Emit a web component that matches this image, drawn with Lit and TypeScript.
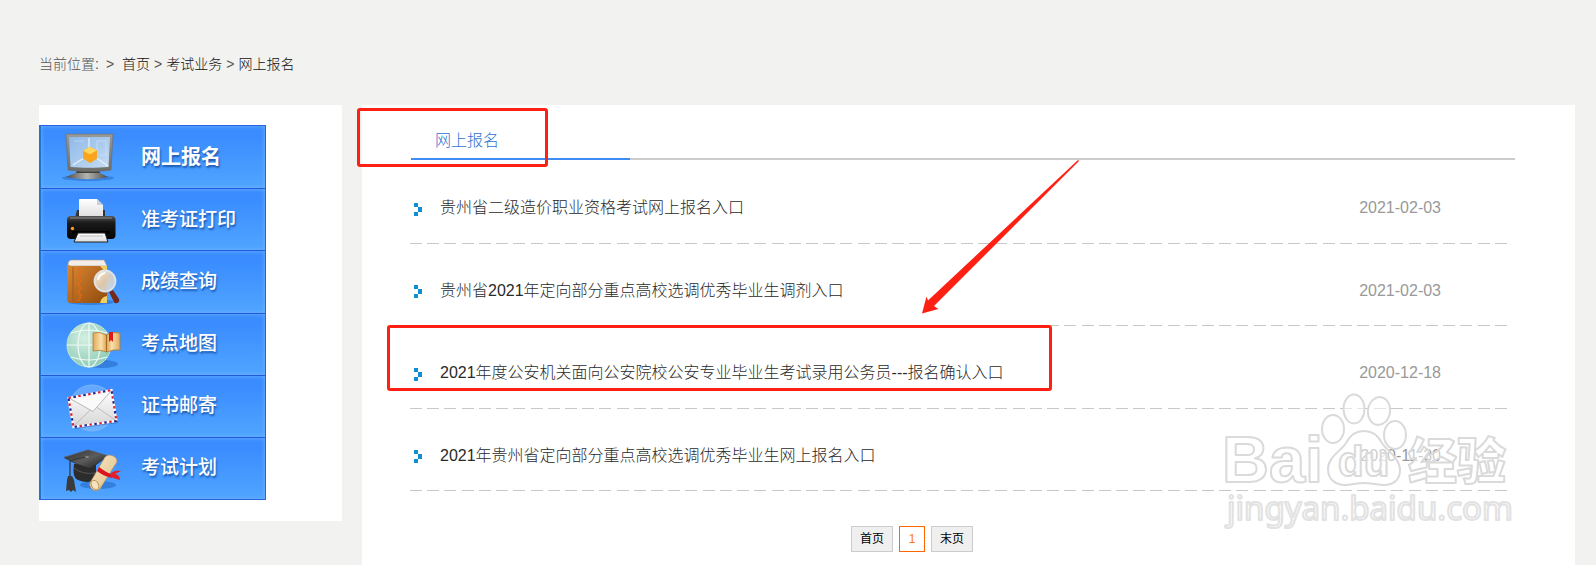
import { LitElement, html, svg, css } from "lit";
import { customElement } from "lit/decorators.js";
import { classMap } from "lit/directives/class-map.js";

const monitorIcon = svg`
  <defs>
    <linearGradient id="frame" x1="0" y1="0" x2="0" y2="1"><stop offset="0" stop-color="#9a9a98"/><stop offset="1" stop-color="#6d6d6a"/></linearGradient>
    <linearGradient id="glass" x1="0" y1="0" x2="1" y2="1"><stop offset="0" stop-color="#8fb9e8"/><stop offset="1" stop-color="#c6dcf3"/></linearGradient>
    <linearGradient id="foot" x1="0" y1="0" x2="1" y2="0"><stop offset="0" stop-color="#4b4b49"/><stop offset=".5" stop-color="#b4b4b0"/><stop offset="1" stop-color="#4b4b49"/></linearGradient>
  </defs>
  <ellipse cx="28" cy="49" rx="26" ry="3" fill="#1d5dbb" opacity=".45"/>
  <path d="M17 41h22l1 3H16z" fill="#3e3e3c"/>
  <path d="M15 44h25l8 4c-12 3-28 3-42 0z" fill="url(#foot)"/>
  <path d="M6 5h47l-2 36c-14 2-29 2-43 0z" fill="url(#frame)" stroke="#6a6a68" stroke-width=".6"/>
  <path d="M9 8h41l-1.500 30c-12 1-26 1-38 0z" fill="url(#glass)"/>
  <path d="M29 9v12M24 29l-11 7M35 28l13 9" stroke="#e8f2fc" stroke-width="1.2"/>
  <path d="M37 12h9v14h-9zM14 12h10" stroke="#d9e9fa" stroke-width=".5" fill="none"/>
  <path d="M30 18l7 3.500v8L30 34l-7-4.500v-8z" fill="#f9a61c"/>
  <path d="M30 18l7 3.500-7 4-7-4z" fill="#ffd75c"/>
  <path d="M30 25.500l7-4v8L30 34z" fill="#f9a41c"/>`;

const printerIcon = svg`
  <defs>
    <linearGradient id="sheet" x1="0" y1="0" x2="0" y2="1"><stop offset="0" stop-color="#fff"/><stop offset="1" stop-color="#dcdcdc"/></linearGradient>
    <linearGradient id="body" x1="0" y1="0" x2="0" y2="1"><stop offset="0" stop-color="#555"/><stop offset=".3" stop-color="#1a1a1a"/><stop offset="1" stop-color="#050505"/></linearGradient>
  </defs>
  <path d="M17 18h28v8H15z" fill="#333"/>
  <path d="M19 8q0-1 1-1h17l6 6v13H19z" fill="url(#sheet)"/>
  <path d="M37 7v5q0 1 1 1h5z" fill="#cfcfcf"/>
  <rect x="7" y="24" width="48.500" height="23" rx="4" fill="url(#body)"/>
  <path d="M10 26h42" stroke="#888"/>
  <path d="M12 39h38v3H12z" fill="#000"/>
  <circle cx="12.500" cy="36.500" r="1.700" fill="#ff9b1a"/>
  <path d="M18 41h27l3 9H14z" fill="url(#sheet)" stroke="#222" stroke-width="1"/>
  <path d="M20 44h23" stroke="#bbb"/>`;

const bookIcon = svg`
  <defs>
    <linearGradient id="cover" x1="0" y1="0" x2="1" y2="1"><stop offset="0" stop-color="#dd8a35"/><stop offset="1" stop-color="#8f4a0c"/></linearGradient>
    <linearGradient id="lens" x1="0" y1="0" x2="1" y2="1"><stop offset="0" stop-color="#fff7e8"/><stop offset=".5" stop-color="#e4d2bb"/><stop offset="1" stop-color="#c5dffa"/></linearGradient>
  </defs>
  <ellipse cx="31" cy="48" rx="23" ry="3" fill="#1d5dbb" opacity=".5"/>
  <path d="M8 11q0-5 4-5h32l3 6H10z" fill="#f3eee8" stroke="#a9998a" stroke-width=".6"/>
  <path d="M11 12h36v37H11q-4 0-4-4V9q1 3 4 3z" fill="url(#cover)"/>
  <path d="M13 13v35" stroke="#a5591a"/>
  <path d="M18 14l3 4-3 4 3 4-3 4 3 4-3 4 3 4-3 5" stroke="#e56a17" stroke-width="2" fill="none" stroke-dasharray="2 1"/>
  <path d="M47 12v8l-7-8zM47 49h-7q1-6 7-7z" fill="#f0cf62"/>
  <path d="M49 38l4-2 6 9q1 3-2 4-2 1-3-1z" fill="#74291a"/>
  <circle cx="45" cy="27" r="10.500" fill="url(#lens)" fill-opacity=".9" stroke="#dfe3e8" stroke-width="1.800"/>
  <path d="M38 26q1-6 7-7" stroke="#fff" stroke-width="2" fill="none"/>`;

const globeIcon = svg`
  <defs>
    <radialGradient id="globe" cx=".4" cy=".35" r=".7"><stop offset="0" stop-color="#d3efe2"/><stop offset="1" stop-color="#8ccab4"/></radialGradient>
    <linearGradient id="page" x1="0" y1="0" x2="1" y2="0"><stop offset="0" stop-color="#dfa95e"/><stop offset=".3" stop-color="#fbe1a9"/><stop offset=".5" stop-color="#dba252"/><stop offset=".7" stop-color="#fbe1a9"/><stop offset="1" stop-color="#dfa95e"/></linearGradient>
  </defs>
  <ellipse cx="42" cy="48" rx="16" ry="4" fill="#1d5dbb" opacity=".5"/>
  <circle cx="29" cy="29" r="22" fill="url(#globe)" stroke="#bfe7d8"/>
  <g fill="none" stroke="#eefaf5" stroke-width="1.200">
    <path d="M7 29h44M11 17q18-6 36 0M11 41q18 6 36 0M29 7v44"/>
    <ellipse cx="29" cy="29" rx="11" ry="22"/>
  </g>
  <path d="M33 17q7-2 13 2 6-4 14-2v17q-7-1-13 2-7-3-14-1z" fill="url(#page)" stroke="#b6792c" stroke-width=".8"/>
  <path d="M46.500 19v17" stroke="#a86a20"/>
  <path d="M49 16h4v10l-2-2-2 2z" fill="#e01818"/>`;

const mailIcon = svg`
  <defs>
    <linearGradient id="mail" x1="0" y1="0" x2="0" y2="1"><stop offset="0" stop-color="#fff"/><stop offset="1" stop-color="#d5d5d5"/></linearGradient>
  </defs>
  <circle cx="32" cy="30" r="23" fill="#8cc4ff" fill-opacity=".5" stroke="#7ab6f8"/>
  <path d="M10 21l43-8 5 32-43 6z" fill="#174f9f" opacity=".4"/>
  <path d="M8.500 20l43-8 5 31-43 6z" fill="url(#mail)"/>
  <path d="M13.500 48l18-17M56 42.500l-19-13" stroke="#bcbcbc"/>
  <path d="M9 20l24 13.500L51.500 12.500z" fill="#fafafa" stroke="#aaa" stroke-width=".8"/>
  <path d="M8.500 20l43-8 5 31-43 6z" fill="none" stroke="#fff" stroke-width="2.200"/>
  <path d="M8.500 20l43-8 5 31-43 6z" fill="none" stroke="#e02038" stroke-width="2.200" stroke-dasharray="2.500 7.500"/>
  <path d="M8.500 20l43-8 5 31-43 6z" fill="none" stroke="#26268e" stroke-width="2.200" stroke-dasharray="2.500 7.500" stroke-dashoffset="-5"/>`;

const capIcon = svg`
  <defs>
    <linearGradient id="board" x1="0" y1="0" x2="1" y2="1"><stop offset="0" stop-color="#2b2b2b"/><stop offset=".5" stop-color="#5c5c5c"/><stop offset="1" stop-color="#161616"/></linearGradient>
    <linearGradient id="scroll" x1="0" y1="0" x2="1" y2="1"><stop offset="0" stop-color="#f8e8c8"/><stop offset=".6" stop-color="#e9cf9f"/><stop offset="1" stop-color="#bd9457"/></linearGradient>
  </defs>
  <ellipse cx="38" cy="45" rx="18" ry="4" fill="#1d5dbb" opacity=".5"/>
  <path d="M14 24q-2 14 4 16 9 4 18 0V24z" fill="#2c2c2c"/>
  <path d="M14 28q8 7 22 5" stroke="#555" fill="none"/>
  <path d="M4 17.500L28 10l20 6-18 13q-13-4-26-11.500z" fill="url(#board)" stroke="#222" stroke-width=".6"/>
  <path d="M4 17.500L28 10l20 6" stroke="#777" stroke-width=".6" fill="none"/>
  <path d="M27 17q-10 1-17 4v16" stroke="#333" stroke-width="1.200" fill="none"/>
  <ellipse cx="27" cy="17" rx="2" ry="1" fill="#888"/>
  <path d="M8 36h4l2 4 2 12-3-2-2 2-2-2-3 1 1-11z" fill="#3b3b3b"/>
  <path d="M45 17q4-4 10 0 4 4 0 8L40 49q-5 4-9-1-3-4 0-7z" fill="url(#scroll)" stroke="#a98450" stroke-width=".6"/>
  <ellipse cx="35" cy="45" rx="3.500" ry="5" transform="rotate(-30 35 45)" fill="#f6e3bd" stroke="#b38b50" stroke-width=".8"/>
  <path d="M39 27q8 6 14 8l-1 3q-9-2-15-7z" fill="#d8141c"/>
  <path d="M50 34q5-5 11-3-4 2-6 3 5 1 5 6-5-1-9-3z" fill="#e5202a"/>`;

const menu = [
  { label: "网上报名", icon: monitorIcon, active: true },
  { label: "准考证打印", icon: printerIcon, active: false },
  { label: "成绩查询", icon: bookIcon, active: false },
  { label: "考点地图", icon: globeIcon, active: false },
  { label: "证书邮寄", icon: mailIcon, active: false },
  { label: "考试计划", icon: capIcon, active: false },
];

const notices = [
  { title: "贵州省二级造价职业资格考试网上报名入口", date: "2021-02-03" },
  { title: "贵州省2021年定向部分重点高校选调优秀毕业生调剂入口", date: "2021-02-03" },
  { title: "2021年度公安机关面向公安院校公安专业毕业生考试录用公务员---报名确认入口", date: "2020-12-18" },
  { title: "2021年贵州省定向部分重点高校选调优秀毕业生网上报名入口", date: "2020-11-30" },
];

@customElement("side-menu")
class SideMenu extends LitElement {
  static styles = css`
    :host {
      display: block;
      background: #fff;
      padding: 20px 0 21px;
    }
    .menu {
      display: grid;
      grid-auto-rows: 1fr;
      width: 227px;
      min-height: 375px;
      box-sizing: border-box;
      border: 1px solid #2763dc;
      border-left: 2px solid #2372cc;
    }
    .item {
      display: flex;
      align-items: center;
      gap: 19px;
      padding-left: 19px;
      color: #fff;
      font-size: 19px;
      line-height: 24px;
      font-weight: 500;
      text-decoration: none;
      text-shadow: 1px 2px 2px #1c57ad;
      background: linear-gradient(#3a8cff 15%, #50a5ff);
      box-shadow: inset 0 0 4px #6fb3ff;
    }
    .item + .item {
      border-top: 1px solid #2258dc;
    }
    .active {
      font-size: 20px;
      font-weight: 700;
    }
    .icon {
      width: 62px;
      height: 56px;
      flex: none;
    }
  `;
  render() {
    return html`<nav class="menu">
      ${menu.map(
        (m) => html`<a href="#" class=${classMap({ item: true, active: m.active })}>
          <svg class="icon" viewBox="0 0 62 56" aria-hidden="true">${m.icon}</svg>
          <span>${m.label}</span>
        </a>`
      )}
    </nav>`;
  }
}

@customElement("notice-list")
class NoticeList extends LitElement {
  static styles = css`
    :host {
      display: block;
    }
    .list {
      display: grid;
      grid-auto-rows: 1fr;
      min-height: 330px;
      margin: 0;
      padding: 0;
      list-style: none;
    }
    .row {
      display: flex;
      align-items: center;
      padding: 12px 71px 0 3px;
      background: repeating-linear-gradient(90deg, #c8c8c8 0 12px, transparent 12px calc(100% / 64)) left bottom / 100% 1px no-repeat;
    }
    .bullet {
      width: 9px;
      height: 15px;
      flex: none;
      fill: #0d8fd6;
      margin-top: 2px;
      margin-right: 18px;
    }
    .title {
      color: #2a2a2a;
      font-size: 16px;
      line-height: 24px;
      font-weight: 300;
      text-decoration: none;
    }
    .date {
      margin-left: auto;
      color: #999;
      font-size: 16px;
      line-height: 24px;
    }
  `;
  render() {
    return html`<ul class="list">
      ${notices.map(
        (n) => html`<li class="row">
          <svg class="bullet" viewBox="0 0 9 15" aria-hidden="true"><path d="M1 1h4v4H1zM5 5h4v5H5zM1 10h4v4H1z" /></svg>
          <a class="title" href="#">${n.title}</a>
          <time class="date" datetime=${n.date}>${n.date}</time>
        </li>`
      )}
    </ul>`;
  }
}

@customElement("app-root")
class AppRoot extends LitElement {
  static styles = css`
    :host {
      display: block;
      box-sizing: border-box;
      min-height: 100vh;
      padding: 0 21px 0 39px;
      background: #f2f2f0;
      font-family: "Liberation Sans", "Noto Sans CJK SC", sans-serif;
    }
    .crumbs {
      display: flex;
      gap: 4px;
      padding: 54px 0 31px;
      font-size: 14px;
      line-height: 20px;
      font-weight: 300;
      color: #555;
    }
    .crumbs a {
      color: #111;
      text-decoration: none;
    }
    .here {
      margin-right: 3px;
    }
    .first {
      margin-right: 4px;
    }
    .columns {
      display: grid;
      grid-template-columns: 303px 1fr;
      gap: 20px;
      align-items: start;
    }
    .panel {
      position: relative;
      background: #fff;
      padding: 0 60px 13px 48px;
    }
    .tabs {
      display: flex;
      height: 53px;
      margin-left: 1px;
      border-bottom: 2px solid #ccc;
    }
    .tab {
      width: 195px;
      height: 53px;
      margin: 0;
      padding-left: 24px;
      border-bottom: 2px solid #3f8cf5;
      color: #2f73d3;
      font-size: 16px;
      line-height: 72px;
      font-weight: 300;
    }
    .notices {
      margin: 1px 3px 0 0;
    }
    .pager {
      display: flex;
      justify-content: center;
      gap: 6px;
      padding: 35px 101px 0 0;
    }
    .page {
      box-sizing: border-box;
      height: 26px;
      padding: 0 8px;
      border: 1px solid #ccc;
      background: #efefef;
      color: #000;
      font-family: inherit;
      font-size: 12px;
      line-height: 24px;
    }
    .current {
      width: 26px;
      border-color: #f60;
      background: #fff;
      color: #ff7a00;
    }
    .mark {
      position: absolute;
      box-sizing: border-box;
      border: 3px solid #ff2014;
      border-radius: 3px;
      pointer-events: none;
    }
    .mark-tab {
      left: -5px;
      top: 3px;
      width: 191px;
      height: 59px;
    }
    .mark-row {
      left: 25px;
      top: 220px;
      width: 665px;
      height: 66px;
    }
    .arrow {
      position: absolute;
      left: 558px;
      top: 53px;
      width: 162px;
      height: 158px;
      fill: #ff2014;
      pointer-events: none;
    }
    .watermark {
      position: absolute;
      right: 60px;
      bottom: 30px;
      width: 295px;
      height: 145px;
      overflow: visible;
      pointer-events: none;
      fill: #fff;
      fill-opacity: 0.5;
      stroke: #dadada;
      stroke-width: 2;
      stroke-linejoin: round;
    }
    .wm-logo {
      font: 700 65px "Liberation Sans", sans-serif;
    }
    .wm-du {
      font: 700 42px "Liberation Sans", sans-serif;
    }
    .wm-cjk {
      font: 900 49px "Noto Sans CJK SC", sans-serif;
    }
    .wm-url {
      font: 400 33px "Noto Sans", sans-serif;
      stroke: #e2e2e2;
    }
  `;
  render() {
    return html`
      <nav class="crumbs">
        <span class="here">当前位置:</span>
        <span class="first">&gt;</span>
        <a href="#">首页</a>
        <span>&gt;</span>
        <a href="#">考试业务</a>
        <span>&gt;</span>
        <a href="#">网上报名</a>
      </nav>
      <div class="columns">
        <side-menu></side-menu>
        <main class="panel">
          <header class="tabs"><h1 class="tab">网上报名</h1></header>
          <notice-list class="notices"></notice-list>
          <div class="pager">
            <button class="page">首页</button>
            <button class="page current">1</button>
            <button class="page">末页</button>
          </div>
          <div class="mark mark-tab"></div>
          <div class="mark mark-row"></div>
          <svg class="arrow" viewBox="920 158 162 158" aria-hidden="true">
            <path d="M922 313.500L926.500 296.500L928 300.500L1078 160L1079 161L934 306L938.500 309z" />
          </svg>
          <svg class="watermark" viewBox="1220 390 295 145" aria-hidden="true">
            <text class="wm-logo" x="1222" y="482">Bai</text>
            <ellipse cx="1333" cy="429" rx="11" ry="14" />
            <ellipse cx="1354" cy="409" rx="10.500" ry="14.500" />
            <ellipse cx="1379" cy="411" rx="11" ry="14" transform="rotate(8 1379 411)" />
            <ellipse cx="1395" cy="435" rx="11" ry="14" />
            <path d="M1364 431c9 0 14 4 18 12 5 8 18 15 18 27 0 11-8 15-16 15-7 0-12-2-20-2s-12 2-19 2c-9 0-17-5-17-16 0-12 13-18 18-26 4-8 9-12 18-12z" />
            <text class="wm-du" x="1338" y="476">du</text>
            <text class="wm-cjk" x="1408" y="479">经验</text>
            <text class="wm-url" x="1227" y="520">jingyan.baidu.com</text>
          </svg>
        </main>
      </div>
    `;
  }
}
